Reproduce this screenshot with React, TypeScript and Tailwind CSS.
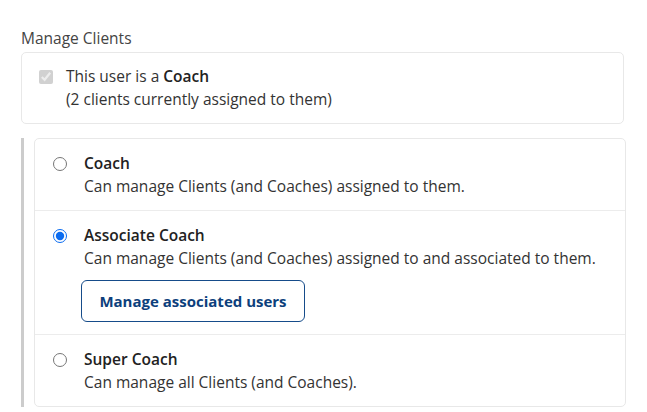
import React from "react";

const roles = [
  {
    id: "coach",
    title: "Coach",
    description: "Can manage Clients (and Coaches) assigned to them.",
  },
  {
    id: "associate",
    title: "Associate Coach",
    description:
      "Can manage Clients (and Coaches) assigned to and associated to them.",
  },
  {
    id: "super",
    title: "Super Coach",
    description: "Can manage all Clients (and Coaches).",
  },
];

const App = () => {
  const [role, setRole] = React.useState("associate");

  return (
    <div
      className="w-[647px] h-[412px] bg-white px-[21px] pt-[27px] text-[15.5px] leading-[23px] text-[#333]"
      style={{ fontFamily: '"Open Sans", "Noto Sans", sans-serif' }}
    >
      <div className="text-[#444] mb-[2px]">Manage Clients</div>

      <div className="w-[603px] border border-[#e8e8e8] rounded-[5px] pl-[17px] pr-4 pt-[12px] pb-[12px] flex gap-[13px]">
        <input
          type="checkbox"
          checked
          disabled
          readOnly
          className="w-[14px] h-[14px] mt-[5px] m-0 shrink-0"
        />
        <div>
          <div>
            This user is a <span className="font-semibold text-[#222]">Coach</span>
          </div>
          <div>(2 clients currently assigned to them)</div>
        </div>
      </div>

      <div className="flex mt-[14px]">
        <div className="w-[3px] bg-[#cccccc] shrink-0" />
        <div className="ml-[10px] flex-1 border border-[#e8e8e8] rounded-[5px] divide-y divide-[#ececec]">
          {roles.map((r) => (
            <label
              key={r.id}
              className="flex gap-[17px] pl-[18px] pr-4 pt-[13px] pb-[12px] cursor-pointer"
            >
              <input
                type="radio"
                name="role"
                checked={role === r.id}
                onChange={() => setRole(r.id)}
                className="w-[14px] h-[14px] m-0 mt-[5px] shrink-0 accent-[#0b6cf0]"
              />
              <div className="flex flex-col items-start">
                <div className="font-semibold text-[#222]">{r.title}</div>
                <div>{r.description}</div>
                {r.id === "associate" && (
                  <button
                    type="button"
                    className="mt-[10px] -ml-[3px] w-[224px] h-[42px] border border-[#164c8a] rounded-[6px] text-[15px] text-[#0d3f7c] font-bold"
                  >
                    Manage associated users
                  </button>
                )}
              </div>
            </label>
          ))}
        </div>
      </div>
    </div>
  );
};

export default App;
